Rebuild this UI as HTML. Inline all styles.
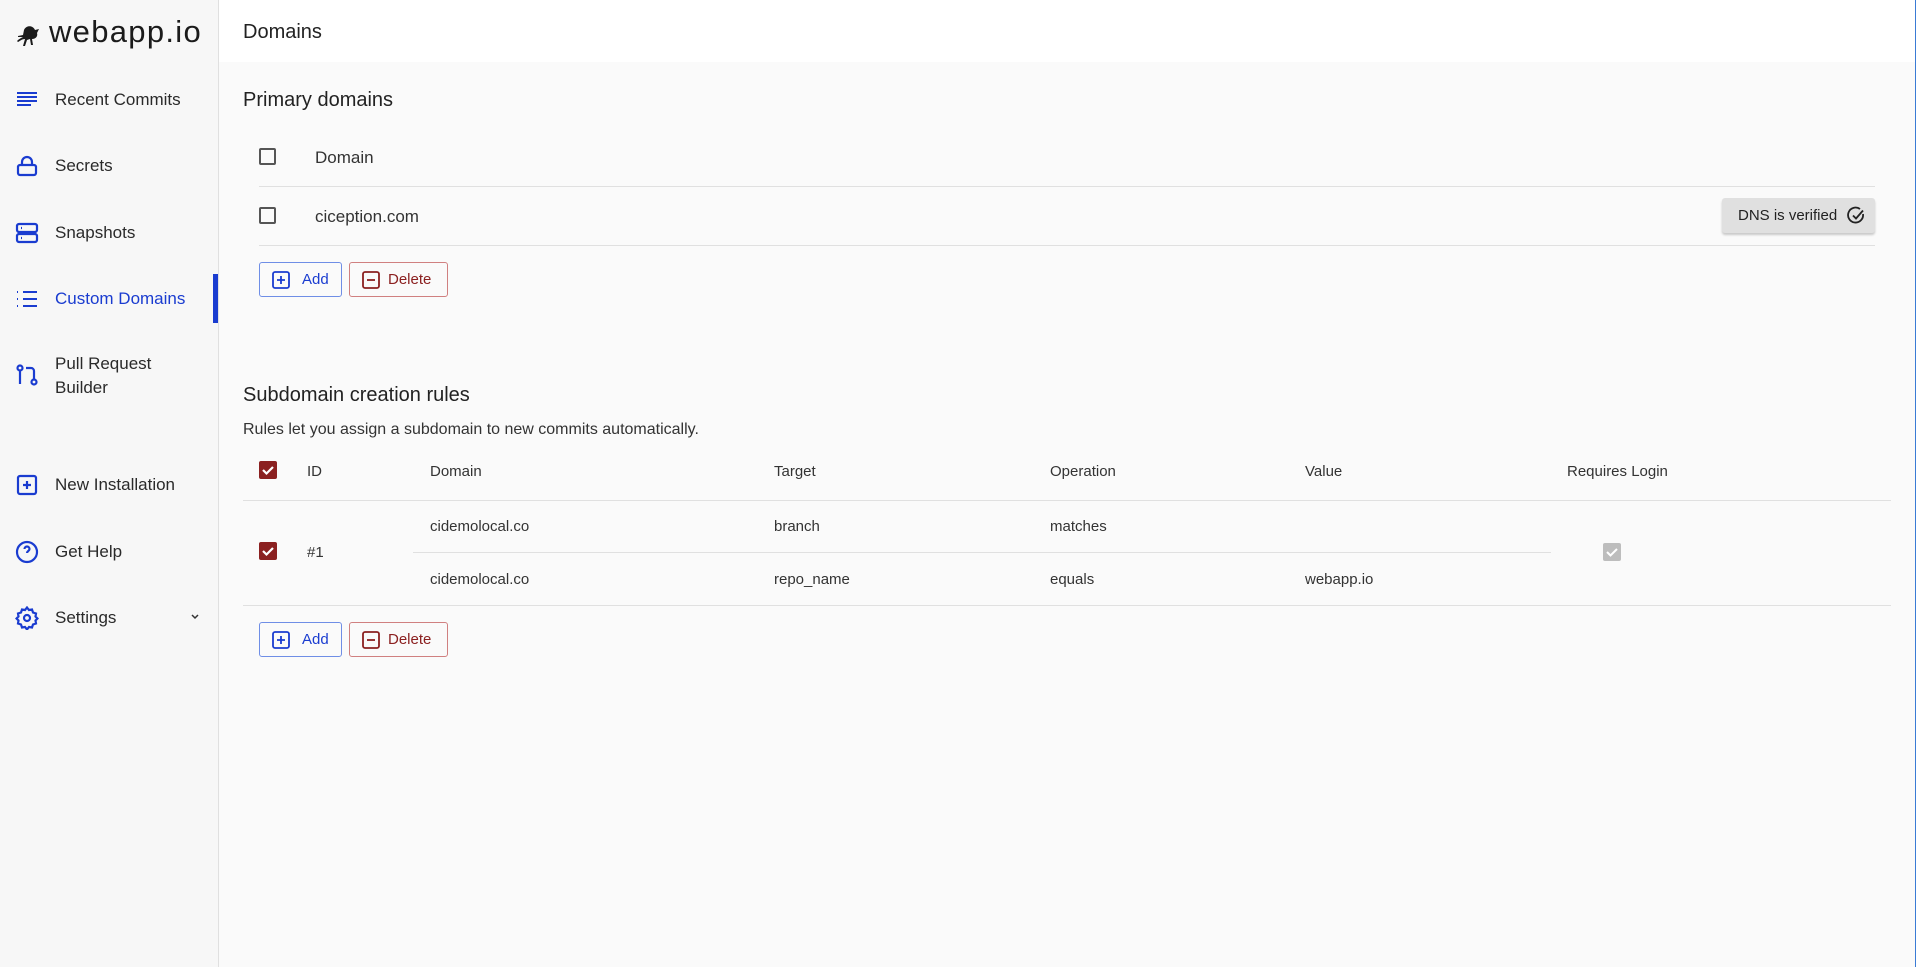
<!DOCTYPE html>
<html><head><meta charset="utf-8"><style>
*{box-sizing:border-box;margin:0;padding:0}
body{width:1916px;height:967px;overflow:hidden;background:#fafafa;font-family:"Liberation Sans",sans-serif;color:#222;position:relative}
.sb{position:absolute;left:0;top:0;width:219px;height:967px;background:#f7f7f7;border-right:1px solid #e0e0e0}
.logo{position:absolute;left:49px;top:14px;font-size:31px;letter-spacing:1.3px;color:#1b1b1b}
.nav{position:absolute;left:55px;font-size:17px;color:#2a2a2a;line-height:24px}
.ic{position:absolute;left:15px;width:24px;height:24px}
.act{position:absolute;left:213px;top:274px;width:5px;height:49px;background:#1a3cd0}
.hdr{position:absolute;left:219px;top:0;right:0;height:62px;background:#fff}
.t{position:absolute;white-space:nowrap}
.line{position:absolute;height:1px;background:#e0e0e0}
.cb{position:absolute;width:17px;height:17px;border:2px solid #555;border-radius:2px}
.cbr{position:absolute;width:18px;height:18px;background:#8b2020;border-radius:2px}
.btn{position:absolute;height:35px;border:1px solid;border-radius:3px;font-size:15px;line-height:33px}
.sm{font-size:15px;color:#333}
</style></head><body>
<div class="sb">
<svg style="position:absolute;left:14px;top:22px" width="28" height="26" viewBox="0 0 28 26"><path d="M10 8c2-5 9-5 11 0l4-1-2 4c1 3-1 6-5 6l1 6h-2l-1-6-3 1-2 6H9l2-7c-3 0-5 2-7 3l-1-1c2-2 4-3 6-4l-5 0 0-1 5-1z" fill="#1b1b1b"/></svg>
<div class="logo">webapp.io</div>
<svg class="ic" style="top:88px" viewBox="0 0 24 24" fill="none" stroke="#1a3cd0" stroke-width="2"><path d="M2 5h20M2 9h20M2 13h20M2 17h14"/></svg>
<div class="nav" style="top:88px">Recent Commits</div>
<svg class="ic" style="top:154px" viewBox="0 0 24 24" fill="none" stroke="#1a3cd0" stroke-width="2.2"><rect x="3" y="11" width="18" height="10" rx="2"/><path d="M7 11V8a5 5 0 0110 0v3"/></svg>
<div class="nav" style="top:154px">Secrets</div>
<svg class="ic" style="top:221px" viewBox="0 0 24 24" fill="none" stroke="#1a3cd0" stroke-width="2.2"><rect x="2" y="3" width="20" height="8" rx="2"/><rect x="2" y="13" width="20" height="8" rx="2"/><path d="M6 7h1M6 17h1"/></svg>
<div class="nav" style="top:221px">Snapshots</div>
<svg class="ic" style="top:287px" viewBox="0 0 24 24" fill="none" stroke="#1a3cd0" stroke-width="2"><path d="M8 5h14M8 12h14M8 19h14M2 5h1M2 12h1M2 19h1"/></svg>
<div class="nav" style="top:287px;color:#1a3cd0">Custom Domains</div>
<div class="act"></div>
<svg class="ic" style="top:363px" viewBox="0 0 24 24" fill="none" stroke="#1a3cd0" stroke-width="2.2"><circle cx="5" cy="5" r="2.5"/><path d="M5 8v13M11 5h5a3 3 0 013 3v8"/><circle cx="19" cy="19" r="2.5"/></svg>
<div class="nav" style="top:352px">Pull Request<br>Builder</div>
<svg class="ic" style="top:473px" viewBox="0 0 24 24" fill="none" stroke="#1a3cd0" stroke-width="2.2"><rect x="3" y="3" width="18" height="18" rx="2"/><path d="M12 8v8M8 12h8"/></svg>
<div class="nav" style="top:473px">New Installation</div>
<svg class="ic" style="top:540px" viewBox="0 0 24 24" fill="none" stroke="#1a3cd0" stroke-width="2.2"><circle cx="12" cy="12" r="10"/><path d="M9.5 9a2.5 2.5 0 015 0c0 2-2.5 2-2.5 4M12 17h.01"/></svg>
<div class="nav" style="top:540px">Get Help</div>
<svg class="ic" style="top:606px" viewBox="0 0 24 24" fill="none" stroke="#1a3cd0" stroke-width="2.2"><circle cx="12" cy="12" r="3"/><path d="M12 1.5l2 2.5 3-.5 1 3 3 1-.5 3 2 2-2 2 .5 3-3 1-1 3-3-.5-2 2.5-2-2.5-3 .5-1-3-3-1 .5-3-2-2 2-2-.5-3 3-1 1-3 3 .5z"/></svg>
<div class="nav" style="top:606px">Settings</div>
<svg style="position:absolute;left:190px;top:613px" width="10" height="8" viewBox="0 0 10 8" fill="none" stroke="#333" stroke-width="1.5"><path d="M2 2l3 3 3-3"/></svg>
</div>
<div class="hdr"><div class="t" style="left:24px;top:21px;font-size:20px;color:#222">Domains</div></div>
<div style="position:absolute;right:0;top:0;width:1px;height:967px;background:#3a7bd5"></div>

<div class="t" style="left:243px;top:89px;font-size:20px">Primary domains</div>
<div class="cb" style="left:259px;top:148px"></div>
<div class="t" style="left:315px;top:148px;font-size:17px;color:#333">Domain</div>
<div class="line" style="left:259px;top:186px;width:1616px"></div>
<div class="cb" style="left:259px;top:207px"></div>
<div class="t" style="left:315px;top:207px;font-size:17px;color:#333">ciception.com</div>
<div style="position:absolute;left:1722px;top:198px;width:153px;height:35px;background:#e0e0e0;border-radius:3px;box-shadow:0 2px 2px rgba(0,0,0,.2);font-size:15px;line-height:35px;padding-left:16px;color:#222">DNS is verified
<svg style="position:absolute;left:124px;top:8px" width="20" height="20" viewBox="0 0 20 20" fill="none" stroke="#222" stroke-width="1.8"><path d="M17 8a7.5 7.5 0 11-3-5"/><path d="M7 9.5l3 3 7-8"/></svg></div>
<div class="line" style="left:259px;top:245px;width:1616px"></div>
<div class="btn" style="left:259px;top:262px;width:83px;border-color:#6f8ee6;color:#1a3cd0;padding-left:42px">Add
<svg style="position:absolute;left:12px;top:8px" width="18" height="18" viewBox="0 0 18 18" fill="none" stroke="#1a3cd0" stroke-width="1.8"><rect x="1" y="1" width="16" height="16" rx="2"/><path d="M9 5v8M5 9h8"/></svg></div>
<div class="btn" style="left:349px;top:262px;width:99px;border-color:#d08080;color:#8b2020;padding-left:38px">Delete
<svg style="position:absolute;left:12px;top:8px" width="18" height="18" viewBox="0 0 18 18" fill="none" stroke="#8b2020" stroke-width="1.8"><rect x="1" y="1" width="16" height="16" rx="2"/><path d="M5 9h8"/></svg></div>

<div class="t" style="left:243px;top:384px;font-size:20px">Subdomain creation rules</div>
<div class="t" style="left:243px;top:421px;font-size:16px;color:#333">Rules let you assign a subdomain to new commits automatically.</div>
<div class="cbr" style="left:259px;top:461px"><svg width="18" height="18" viewBox="0 0 18 18" fill="none" stroke="#fff" stroke-width="2.2"><path d="M4 9l3.5 3.5L14 6"/></svg></div>
<div class="t sm" style="left:307px;top:463px">ID</div>
<div class="t sm" style="left:430px;top:463px">Domain</div>
<div class="t sm" style="left:774px;top:463px">Target</div>
<div class="t sm" style="left:1050px;top:463px">Operation</div>
<div class="t sm" style="left:1305px;top:463px">Value</div>
<div class="t sm" style="left:1567px;top:463px">Requires Login</div>
<div class="line" style="left:243px;top:500px;width:1648px"></div>
<div class="t sm" style="left:430px;top:518px">cidemolocal.co</div>
<div class="t sm" style="left:774px;top:518px">branch</div>
<div class="t sm" style="left:1050px;top:518px">matches</div>
<div class="line" style="left:413px;top:552px;width:1138px"></div>
<div class="cbr" style="left:259px;top:542px"><svg width="18" height="18" viewBox="0 0 18 18" fill="none" stroke="#fff" stroke-width="2.2"><path d="M4 9l3.5 3.5L14 6"/></svg></div>
<div class="t sm" style="left:307px;top:544px">#1</div>
<div style="position:absolute;left:1603px;top:543px;width:18px;height:18px;background:#bdbdbd;border-radius:2px"><svg width="18" height="18" viewBox="0 0 18 18" fill="none" stroke="#fff" stroke-width="2"><path d="M4 9l3.5 3.5L14 6"/></svg></div>
<div class="t sm" style="left:430px;top:571px">cidemolocal.co</div>
<div class="t sm" style="left:774px;top:571px">repo_name</div>
<div class="t sm" style="left:1050px;top:571px">equals</div>
<div class="t sm" style="left:1305px;top:571px">webapp.io</div>
<div class="line" style="left:243px;top:605px;width:1648px"></div>
<div class="btn" style="left:259px;top:622px;width:83px;border-color:#6f8ee6;color:#1a3cd0;padding-left:42px">Add
<svg style="position:absolute;left:12px;top:8px" width="18" height="18" viewBox="0 0 18 18" fill="none" stroke="#1a3cd0" stroke-width="1.8"><rect x="1" y="1" width="16" height="16" rx="2"/><path d="M9 5v8M5 9h8"/></svg></div>
<div class="btn" style="left:349px;top:622px;width:99px;border-color:#d08080;color:#8b2020;padding-left:38px">Delete
<svg style="position:absolute;left:12px;top:8px" width="18" height="18" viewBox="0 0 18 18" fill="none" stroke="#8b2020" stroke-width="1.8"><rect x="1" y="1" width="16" height="16" rx="2"/><path d="M5 9h8"/></svg></div>
</body></html>
